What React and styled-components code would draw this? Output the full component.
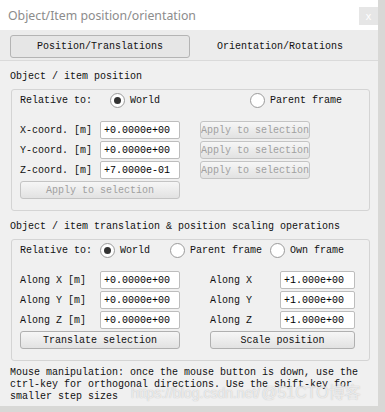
import React from 'react';
import styled, { createGlobalStyle } from 'styled-components';

const GlobalStyle = createGlobalStyle`
  html, body {
    margin: 0;
    padding: 0;
    background: #d8d8d6;
  }
  * { box-sizing: border-box; }
`;

const Desktop = styled.div`
  width: 385px;
  height: 412px;
  position: relative;
  overflow: hidden;
  background: #d8d8d6;
`;

const Window = styled.div`
  width: 378px;
  height: 406px;
  background: #f0f0f0;
  display: flex;
  flex-direction: column;
  overflow: hidden;
  font-family: "Liberation Mono", "Courier New", monospace;
  font-size: 10px;
  color: #111;
  white-space: nowrap;
`;

const TitleBar = styled.div`
  height: 30px;
  background: #ffffff;
  display: flex;
  align-items: center;
  justify-content: space-between;
  padding-left: 8px;
`;

const Title = styled.span`
  font-family: "Noto Sans", "Open Sans", sans-serif;
  font-size: 12.3px;
  color: #8c8c8c;
`;

const CloseButton = styled.div`
  width: 19px;
  height: 18px;
  margin-top: 2px;
  background: #e6e6e6;
  color: #ffffff;
  font-family: "Liberation Sans", sans-serif;
  font-size: 11px;
  display: flex;
  align-items: center;
  justify-content: center;
`;

const TabBar = styled.div`
  height: 31px;
  background: #ececec;
  border-bottom: 1px solid #dadada;
  display: flex;
  align-items: flex-start;
  padding: 5px 0 0 10px;
`;

const Tab = styled.div`
  width: 180px;
  height: 23px;
  display: flex;
  align-items: center;
  justify-content: center;
  font-size: 10px;
  border-radius: 3px;
  border: 1px solid ${p => (p.$active ? '#b4b4b4' : 'transparent')};
  background: ${p => (p.$active ? '#e6e6e6' : 'transparent')};
`;

const Content = styled.div`
  display: flex;
  flex-direction: column;
  padding: 10px 8px 0 10px;
`;

const SectionLabel = styled.div`
  height: 12px;
  line-height: 12px;
  margin-bottom: 6px;
`;

const Group = styled.div`
  margin-left: 1px;
  width: 359px;
  border: 1px solid #d4d4d4;
  border-radius: 3px;
  background: #f0f0f0;
  padding: 1px 8px 11px 8px;
  display: flex;
  flex-direction: column;
  gap: 2px;
  margin-bottom: ${p => p.$gapAfter || 0}px;
`;

const RadioRow = styled.div`
  height: 18px;
  display: grid;
  grid-template-columns: ${p => p.$cols};
  align-items: center;
  margin-bottom: 10px;
`;

const RadioOption = styled.label`
  display: flex;
  align-items: center;
  gap: 5px;
`;

const RadioCircle = styled.span`
  width: 15px;
  height: 15px;
  border-radius: 50%;
  border: 1px solid #9a9a9a;
  background: #ffffff;
  display: flex;
  align-items: center;
  justify-content: center;
  &::after {
    content: '';
    width: 7px;
    height: 7px;
    border-radius: 50%;
    background: ${p => (p.$checked ? '#333333' : 'transparent')};
  }
`;

const FieldRow = styled.div`
  height: 18px;
  display: flex;
  align-items: center;
`;

const FieldLabel = styled.span`
  width: ${p => p.$w}px;
  flex-shrink: 0;
`;

const Input = styled.div`
  width: ${p => p.$w}px;
  height: 18px;
  background: #ffffff;
  border: 1px solid #bdbdbd;
  border-radius: 2px;
  padding-left: 3px;
  display: flex;
  align-items: center;
  color: #000;
  margin-right: ${p => p.$mr || 0}px;
  flex-shrink: 0;
`;

const Button = styled.div`
  width: ${p => p.$w}px;
  height: 18px;
  border: 1px solid ${p => (p.$disabled ? '#c4c4c4' : '#b0b0b0')};
  border-radius: 3px;
  background: linear-gradient(#f6f6f6, #e2e2e2);
  color: ${p => (p.$disabled ? '#a0a0a0' : '#111')};
  display: flex;
  align-items: center;
  justify-content: center;
  white-space: nowrap;
  overflow: hidden;
  margin-right: ${p => p.$mr || 0}px;
  flex-shrink: 0;
`;

const Help = styled.div`
  margin-top: 6px;
  line-height: 12px;
  white-space: pre;
`;

const Watermark = styled.div`
  position: absolute;
  left: 131px;
  top: 379px;
  font-family: "Liberation Sans", "Noto Sans CJK SC", sans-serif;
  color: rgba(255, 255, 255, 0.7);
  text-shadow: 0 0 1px rgba(120, 120, 120, 0.5);
  display: flex;
  align-items: baseline;
  gap: 1px;
  white-space: nowrap;
  pointer-events: none;
`;

const WmSmall = styled.span`
  font-size: 14px;
`;

const WmBig = styled.span`
  font-size: 16px;
`;

const Radio = ({ checked, children }) => (
  <RadioOption>
    <RadioCircle $checked={checked} />
    {children}
  </RadioOption>
);

const coords = [
  ['X-coord. [m]', '+0.0000e+00'],
  ['Y-coord. [m]', '+0.0000e+00'],
  ['Z-coord. [m]', '+7.0000e-01'],
];

const along = ['X', 'Y', 'Z'];

export default function App() {
  return (
    <Desktop>
      <GlobalStyle />
      <Window>
        <TitleBar>
          <Title>Object/Item position/orientation</Title>
          <CloseButton>x</CloseButton>
        </TitleBar>
        <TabBar>
          <Tab $active>Position/Translations</Tab>
          <Tab>Orientation/Rotations</Tab>
        </TabBar>
        <Content>
          <SectionLabel>Object / item position</SectionLabel>
          <Group $gapAfter={10}>
            <RadioRow $cols="90px 140px auto">
              <span>Relative to:</span>
              <Radio checked>World</Radio>
              <Radio>Parent frame</Radio>
            </RadioRow>
            {coords.map(([label, value]) => (
              <FieldRow key={label}>
                <FieldLabel $w={80}>{label}</FieldLabel>
                <Input $w={80} $mr={20}>{value}</Input>
                <Button $w={110} $disabled>Apply to selection</Button>
              </FieldRow>
            ))}
            <FieldRow>
              <Button $w={160} $disabled>Apply to selection</Button>
            </FieldRow>
          </Group>

          <SectionLabel>Object / item translation &amp; position scaling operations</SectionLabel>
          <Group>
            <RadioRow $cols="80px 70px 100px auto">
              <span>Relative to:</span>
              <Radio checked>World</Radio>
              <Radio>Parent frame</Radio>
              <Radio>Own frame</Radio>
            </RadioRow>
            {along.map(a => (
              <FieldRow key={a}>
                <FieldLabel $w={80}>Along {a} [m]</FieldLabel>
                <Input $w={80} $mr={30}>+0.0000e+00</Input>
                <FieldLabel $w={70}>Along {a}</FieldLabel>
                <Input $w={75}>+1.000e+00</Input>
              </FieldRow>
            ))}
            <FieldRow>
              <Button $w={160} $mr={30}>Translate selection</Button>
              <Button $w={145}>Scale position</Button>
            </FieldRow>
          </Group>

          <Help>{`Mouse manipulation: once the mouse button is down, use the
ctrl-key for orthogonal directions. Use the shift-key for
smaller step sizes`}</Help>
        </Content>
      </Window>
      <Watermark>
        <WmSmall>https://blog.csdn.net/</WmSmall>
        <WmBig>@51CTO博客</WmBig>
      </Watermark>
    </Desktop>
  );
}
